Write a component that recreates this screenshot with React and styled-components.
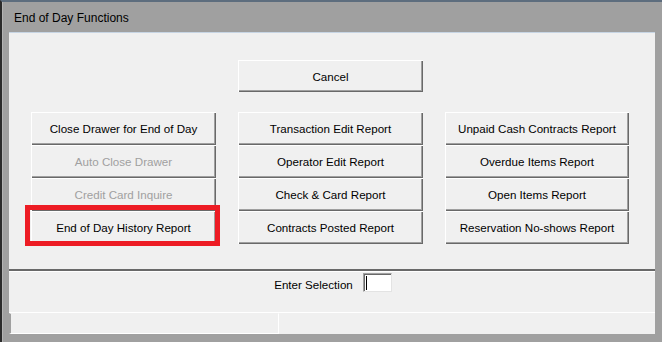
import React from 'react';
import styled, { createGlobalStyle } from 'styled-components';

const GlobalStyle = createGlobalStyle`
  html, body {
    margin: 0;
    padding: 0;
    background: #a0a0a0;
  }
  body {
    font-family: "Liberation Sans", Arial, sans-serif;
    font-size: 12px;
    color: #000;
  }
`;

const Window = styled.div`
  width: 662px;
  height: 342px;
  box-sizing: border-box;
  display: flex;
  flex-direction: column;
  background: #a0a0a0;
  border-top: 2px solid #5d6d7e;
  border-left: 2px solid #2b2b2b;
  box-shadow: inset 1px 0 #b4b4b4;
`;

const TitleBar = styled.div`
  height: 30px;
  display: flex;
  align-items: center;
  padding-left: 12px;
  padding-top: 1px;
  box-sizing: border-box;
`;

const Panel = styled.div`
  flex: 1;
  margin: 0 7px 8px 7px;
  background: #f0f0f0;
  border-top: 1px solid #c7d5e4;
  display: flex;
  flex-direction: column;
`;

const ButtonRow = styled.div`
  display: grid;
  grid-template-columns: 185px 185px 184px;
  column-gap: 22px;
  padding-left: 22px;
`;

const TopRow = styled(ButtonRow)`
  margin-top: 27px;
`;

const ButtonGrid = styled(ButtonRow)`
  margin-top: 20px;
  grid-template-rows: repeat(4, 33px);
  grid-auto-flow: column;
`;

const Button = styled.button`
  height: ${(p) => (p.$tall ? '32px' : '33px')};
  grid-column: ${(p) => p.$col || 'auto'};
  margin: 0;
  padding: 0;
  border: none;
  background: #f0f0f0;
  font-family: "Liberation Sans", Arial, sans-serif;
  font-size: 11.6px;
  color: ${(p) => (p.disabled ? '#a0a0a0' : '#000')};
  box-shadow: inset 1px 1px #ffffff, inset -1px -1px #696969, inset -2px -2px #a0a0a0;
  cursor: default;
  position: relative;
`;

const Highlight = styled.span`
  position: absolute;
  left: -6px;
  top: -6px;
  right: -4px;
  bottom: -2px;
  border: 5px solid #ed1c24;
  pointer-events: none;
`;

const Separator = styled.div`
  margin-top: 25px;
  height: 2px;
  background: #696969;
  border-bottom: 1px solid #ffffff;
`;

const EntryRow = styled.div`
  display: flex;
  justify-content: center;
  align-items: flex-start;
  gap: 10px;
  margin-top: 1px;
  padding-left: 2px;
`;

const EntryLabel = styled.span`
  font-size: 11.6px;
  padding-top: 5px;
`;

const EntryBox = styled.div`
  width: 29px;
  height: 19px;
  box-sizing: border-box;
  background: #ffffff;
  border-top: 1px solid #a0a0a0;
  border-left: 1px solid #a0a0a0;
  border-right: 1px solid #e3e3e3;
  border-bottom: 1px solid #e3e3e3;
  box-shadow: inset 1px 1px #696969;
  display: flex;
  align-items: center;
  padding-left: 2px;
`;

const Caret = styled.span`
  width: 1px;
  height: 14px;
  background: #000;
`;

const StatusBar = styled.div`
  margin-top: auto;
  height: 21px;
  border-top: 1px solid #ffffff;
  display: flex;
`;

const StatusPane = styled.div`
  width: 267px;
  border-left: 2px solid #a0a0a0;
  border-right: 1px solid #ffffff;
  border-bottom: 1px solid #ffffff;
  border-top: 1px solid #f0f0f0;
`;

const col1 = [
  { label: 'Close Drawer for End of Day' },
  { label: 'Auto Close Drawer', disabled: true },
  { label: 'Credit Card Inquire', disabled: true },
  { label: 'End of Day History Report', marked: true },
];

const col2 = [
  { label: 'Transaction Edit Report' },
  { label: 'Operator Edit Report' },
  { label: 'Check & Card Report' },
  { label: 'Contracts Posted Report' },
];

const col3 = [
  { label: 'Unpaid Cash Contracts Report' },
  { label: 'Overdue Items Report' },
  { label: 'Open Items Report' },
  { label: 'Reservation No-shows Report' },
];

export default function App() {
  const all = [...col1, ...col2, ...col3];
  return (
    <>
      <GlobalStyle />
      <Window>
        <TitleBar>End of Day Functions</TitleBar>
        <Panel>
          <TopRow>
            <Button $tall $col="2">Cancel</Button>
          </TopRow>
          <ButtonGrid>
            {all.map((b) => (
              <Button key={b.label} disabled={b.disabled}>
                {b.label}
                {b.marked && <Highlight />}
              </Button>
            ))}
          </ButtonGrid>
          <Separator />
          <EntryRow>
            <EntryLabel>Enter Selection</EntryLabel>
            <EntryBox>
              <Caret />
            </EntryBox>
          </EntryRow>
          <StatusBar>
            <StatusPane />
          </StatusBar>
        </Panel>
      </Window>
    </>
  );
}
